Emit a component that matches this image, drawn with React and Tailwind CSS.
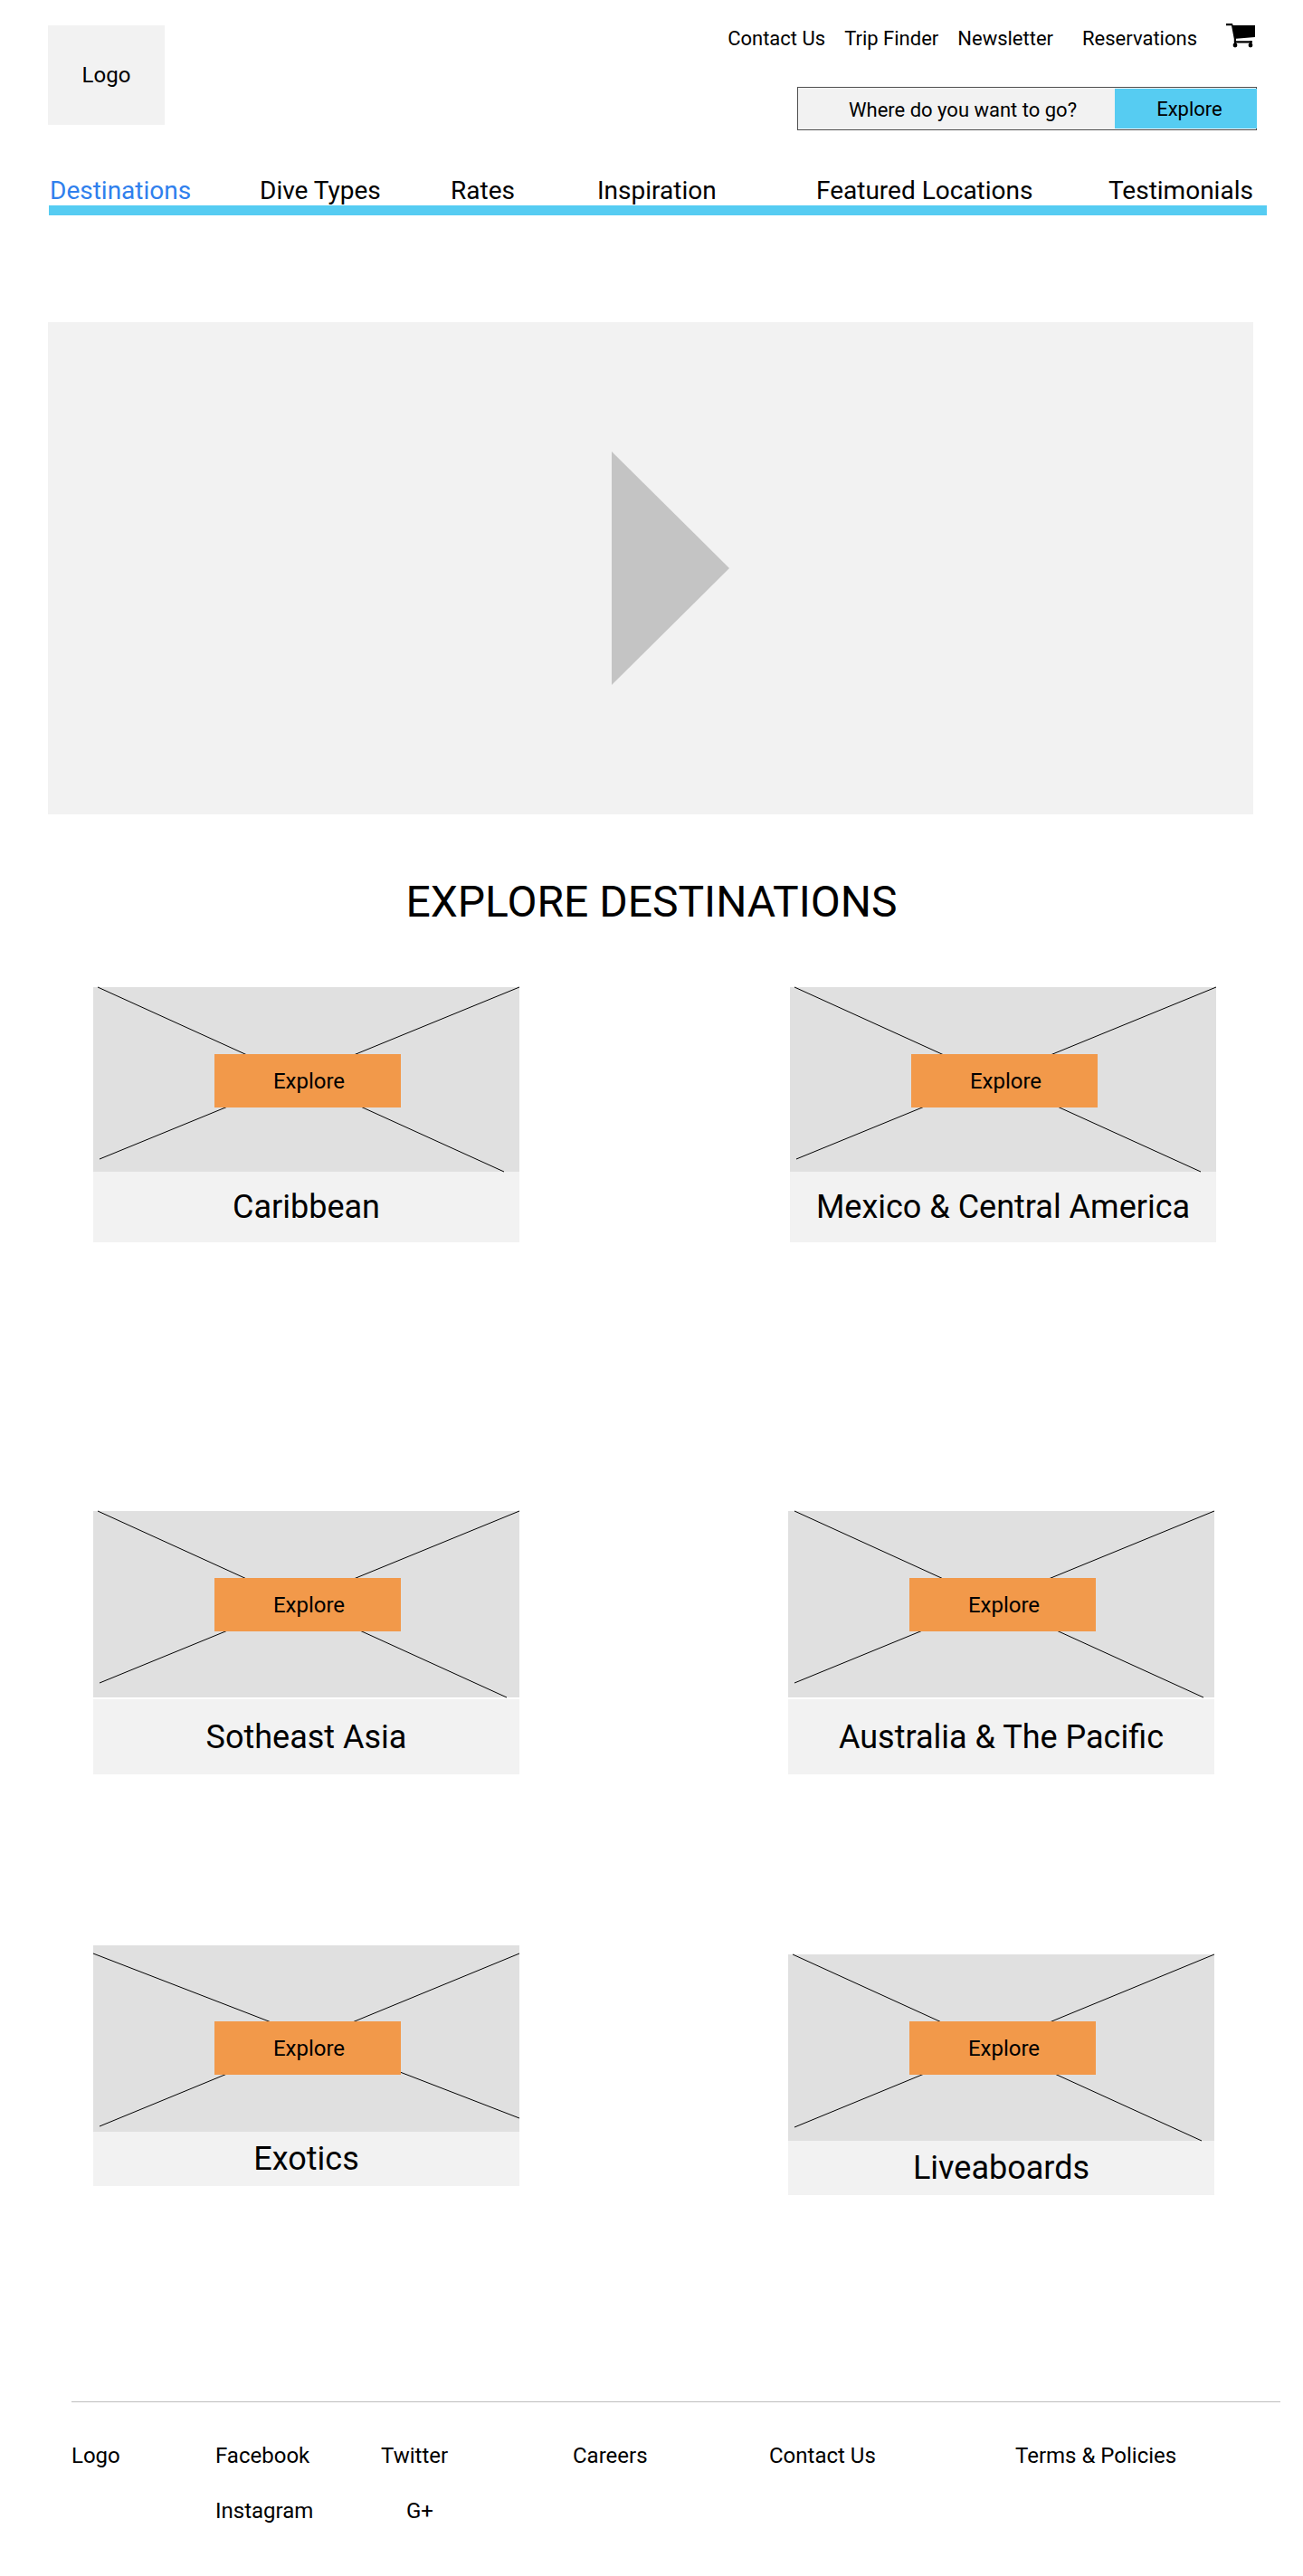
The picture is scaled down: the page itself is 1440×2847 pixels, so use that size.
const utilityLinks = ["Contact Us", "Trip Finder", "Newsletter"];

const sections = [
  "Destinations",
  "Dive Types",
  "Rates",
  "Inspiration",
  "Featured Locations",
  "Testimonials",
];

// Each line is [x1, y1, x2, y2] in the coordinates of the card's picture.
const rows = [
  {
    name: "americas",
    spacing: "gap-x-[299px] pr-24",
    cards: [
      { title: "Caribbean", lines: [[5, 0, 454, 204], [471, 0, 7, 190]] },
      { title: "Mexico & Central America", lines: [[5, 0, 454, 204], [471, 0, 7, 190]] },
    ],
    height: 204,
    picture: "h-[204px] pt-[74px]",
    label: "min-h-[78px]",
  },
  {
    name: "asia-pacific",
    spacing: "mt-[297px] gap-x-[297px] pr-[98px]",
    cards: [
      { title: "Sotheast Asia", lines: [[5, 0, 457, 206], [471, 0, 7, 190]] },
      { title: "Australia & The Pacific", lines: [[7, 0, 459, 206], [471, 0, 7, 190]] },
    ],
    height: 206,
    picture: "h-[206px] pt-[74px]",
    label: "mt-0.5 min-h-[83px]",
  },
  {
    name: "special",
    spacing: "mt-[189px] gap-x-[297px] pr-[98px]",
    cards: [
      {
        title: "Exotics",
        lines: [[0, 9, 471, 191], [471, 9, 7, 200]],
        picture: "h-[206px] pt-[84px]",
      },
      {
        title: "Liveaboards",
        lines: [[5, 0, 457, 206], [471, 0, 7, 191]],
        offset: "mt-2.5",
      },
    ],
    height: 206,
    picture: "h-[206px] pt-[74px]",
    label: "min-h-[60px]",
  },
];

const footerLinks = [
  { text: "Logo", place: "" },
  { text: "Facebook", place: "" },
  { text: "Twitter", place: "" },
  { text: "Careers", place: "" },
  { text: "Contact Us", place: "" },
  { text: "Terms & Policies", place: "" },
  { text: "Instagram", place: "col-start-2" },
  { text: "G+", place: "pl-7" },
];

function CartIcon() {
  return (
    <svg viewBox="0 0 32 27" className="h-[27px] w-8" aria-hidden="true">
      <path d="M0 0H7L7.6 2H32V15L11 16.8V19.2H29V21.6H8.8V17L6 2.2H0Z" fill="#000" />
      <circle cx="10" cy="24" r="2.4" fill="#000" />
      <circle cx="27" cy="24" r="2.4" fill="#000" />
      <path d="M9 19H11V25H9ZM26 19H28V25H26Z" fill="#000" />
    </svg>
  );
}

function SearchBar() {
  return (
    <form
      className="flex h-12 w-full max-w-[508px] items-center border border-[#4f4f4f] bg-[#f2f2f2]"
      onSubmit={(event) => event.preventDefault()}
    >
      <input
        type="text"
        aria-label="Where do you want to go?"
        placeholder="Where do you want to go?"
        className="h-full min-w-0 flex-1 bg-transparent pt-0.5 pl-14 text-[22px] leading-7 text-black outline-none placeholder:text-black placeholder:opacity-100"
      />
      <button type="submit" className="-mr-px h-11 w-[157px] bg-[#56ccf2] pt-0.5 pl-2 text-[22px] leading-7">
        Explore
      </button>
    </form>
  );
}

function Header() {
  return (
    <header className="pt-7">
      <div className="flex justify-between pr-[51px] pl-[53px]">
        <a
          href="#home"
          className="flex h-[110px] w-[129px] shrink-0 items-center justify-center bg-[#f2f2f2] text-2xl leading-7"
        >
          Logo
        </a>
        <div className="flex w-full max-w-[588px] flex-col items-end">
          <div className="flex items-center gap-8 pr-0.5 text-[22px] leading-[30px]">
            <nav aria-label="Utility" className="flex gap-[21px] whitespace-nowrap">
              {utilityLinks.map((text) => (
                <a key={text} href="#utility">
                  {text}
                </a>
              ))}
            </nav>
            <a href="#reservations">Reservations</a>
            <a href="#cart" aria-label="Cart" className="-mt-2">
              <CartIcon />
            </a>
          </div>
          <div className="mt-[38px] flex w-full justify-end">
            <SearchBar />
          </div>
        </div>
      </div>
      <nav
        aria-label="Main"
        className="mt-[51px] mr-10 ml-[54px] grid grid-cols-[232fr_211fr_162fr_242fr_323fr_176fr] border-b-[11px] border-[#56ccf2] text-[28px] leading-8 whitespace-nowrap"
      >
        {sections.map((text, index) => (
          <a key={text} href="#section" className={index === 0 ? "pl-px text-[#2f80ed]" : "pl-px text-black"}>
            {text}
          </a>
        ))}
      </nav>
    </header>
  );
}

function Hero() {
  return (
    <section
      aria-label="Video"
      className="mr-[55px] ml-[53px] mt-[118px] flex h-[544px] items-center justify-center bg-[#f2f2f2] pl-11"
    >
      <button type="button" aria-label="Play video">
        <svg viewBox="0 0 130 258" className="h-[258px] w-[130px]" aria-hidden="true">
          <path d="M0 0L130 129L0 258Z" fill="#c4c4c4" />
        </svg>
      </button>
    </section>
  );
}

function DestinationCard({ card, row }) {
  return (
    <article className={card.offset ?? ""}>
      <div className={`relative flex items-start justify-center bg-[#e0e0e0] pl-[3px] ${card.picture ?? row.picture}`}>
        <svg
          viewBox={`0 0 471 ${row.height}`}
          preserveAspectRatio="none"
          className="absolute inset-0 h-full w-full overflow-visible"
          aria-hidden="true"
        >
          {card.lines.map(([x1, y1, x2, y2]) => (
            <line
              key={`${x1}-${y1}`}
              x1={x1}
              y1={y1}
              x2={x2}
              y2={y2}
              stroke="#000"
              vectorEffect="non-scaling-stroke"
            />
          ))}
        </svg>
        <button
          type="button"
          aria-label={`Explore ${card.title}`}
          className="relative h-[59px] w-[206px] bg-[#f2994a] pl-[3px] text-2xl leading-7"
        >
          Explore
        </button>
      </div>
      <h2 className={`flex items-center justify-center bg-[#f2f2f2] text-4xl ${row.label}`}>{card.title}</h2>
    </article>
  );
}

function Footer() {
  return (
    <footer className="mr-[25px] ml-[79px] mt-[228px] border-t border-[#bdbdbd] pt-[45px] pb-[58px]">
      <nav
        aria-label="Footer"
        className="grid grid-cols-[159fr_183fr_212fr_217fr_272fr_293fr] gap-y-[33px] text-2xl leading-7"
      >
        {footerLinks.map(({ text, place }) => (
          <a key={text} href="#footer" className={place}>
            {text}
          </a>
        ))}
      </nav>
    </footer>
  );
}

export default function App() {
  return (
    <div className="bg-white font-[Roboto,sans-serif] font-normal text-black">
      <Header />
      <main>
        <Hero />
        <h1 className="mt-[69px] text-center text-5xl leading-14">EXPLORE DESTINATIONS</h1>
        <div className="mt-[66px] pl-[103px]">
          {rows.map((row) => (
            <div key={row.name} className={`grid grid-cols-2 items-start ${row.spacing}`}>
              {row.cards.map((card) => (
                <DestinationCard key={card.title} card={card} row={row} />
              ))}
            </div>
          ))}
        </div>
      </main>
      <Footer />
    </div>
  );
}
